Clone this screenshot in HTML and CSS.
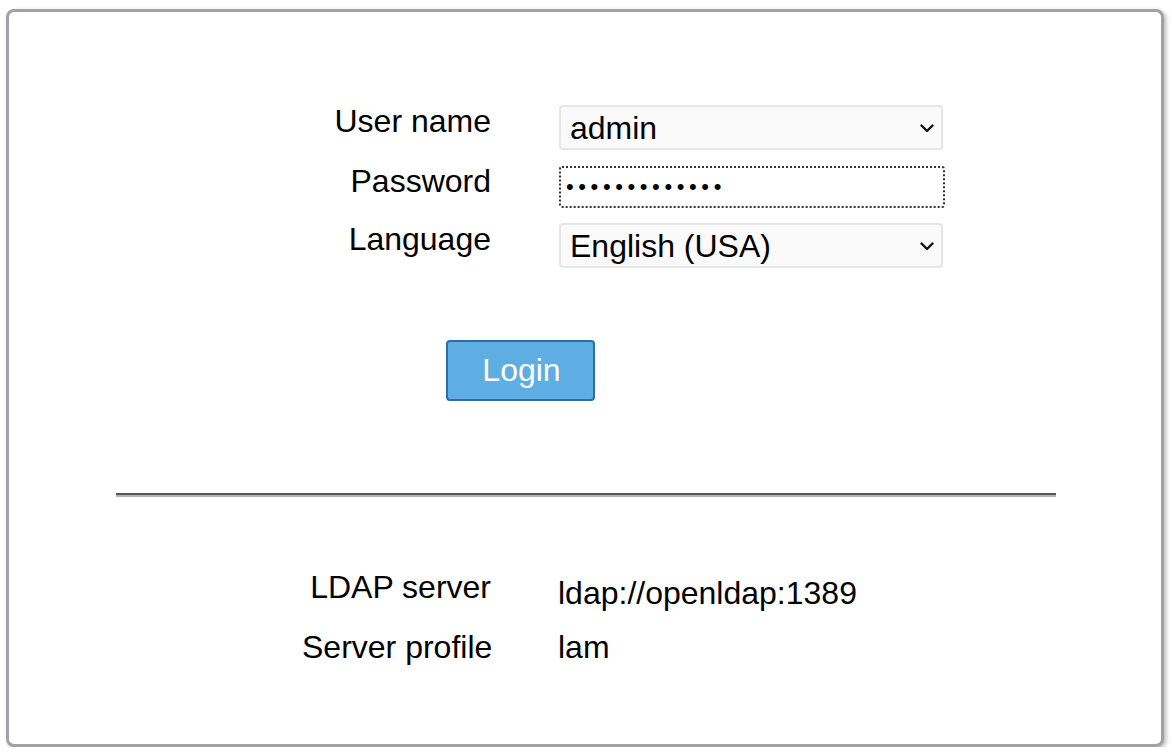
FILE: index.html
```html
<!DOCTYPE html>
<html lang="en">
<head>
<meta charset="utf-8">
<title>LAM Login</title>
<link rel="stylesheet" href="styles.css">
</head>
<body>
<div class="frame">
  <form class="login-grid">
    <label class="lbl" for="user">User name</label>
    <div class="field select-wrap">
      <select id="user" class="select"><option>admin</option></select>
      <svg class="chev" viewBox="0 0 14 9" width="14" height="9"><path d="M1.5 1.5 L7 7 L12.5 1.5" fill="none" stroke="#111" stroke-width="2.4" stroke-linecap="round" stroke-linejoin="round"/></svg>
    </div>
    <label class="lbl" for="pass">Password</label>
    <div class="field pass-cell">
      <input id="pass" class="pass" type="password" value="abcdefghijklm">
    </div>
    <label class="lbl" for="lang">Language</label>
    <div class="field select-wrap">
      <select id="lang" class="select"><option>English (USA)</option></select>
      <svg class="chev" viewBox="0 0 14 9" width="14" height="9"><path d="M1.5 1.5 L7 7 L12.5 1.5" fill="none" stroke="#111" stroke-width="2.4" stroke-linecap="round" stroke-linejoin="round"/></svg>
    </div>
  </form>
  <div class="btn-row"><button class="login-btn" type="button">Login</button></div>
  <hr class="sep">
  <div class="info-grid">
    <div class="lbl">LDAP server</div>
    <div class="val val-first">ldap://openldap:1389</div>
    <div class="lbl">Server profile</div>
    <div class="val">lam</div>
  </div>
</div>
</body>
</html>
```
FILE: styles.css
```css
html, body {
  margin: 0;
  padding: 0;
  background: #ffffff;
}
body {
  font-family: "Liberation Sans", Arial, Helvetica, sans-serif;
  color: #000;
}
.frame {
  box-sizing: border-box;
  width: 1158px;
  height: 738px;
  margin: 9px 0 0 6px;
  border: 3px solid #a2a2a6;
  border-radius: 8px;
  box-shadow: 2px 2px 4px rgba(0, 0, 0, 0.28);
  background: #fff;
  overflow: hidden;
}
.login-grid {
  display: grid;
  grid-template-columns: 189px 386px;
  grid-template-rows: 45px 43px 45px;
  column-gap: 69px;
  row-gap: 15px;
  margin: 93px 0 0 293px;
}
.lbl {
  font-size: 32px;
  line-height: 32px;
  text-align: right;
  align-self: start;
  white-space: nowrap;
}
.field {
  position: relative;
}
.select {
  -webkit-appearance: none;
  appearance: none;
  box-sizing: border-box;
  width: 384px;
  height: 45px;
  margin: 0 0 0 -1px;
  padding: 0 40px 0 9px;
  font-family: "Liberation Sans", Arial, Helvetica, sans-serif;
  font-size: 32px;
  color: #000;
  background: #fafafa;
  border: 2px solid #e6e6e6;
  border-radius: 4px;
  outline: none;
}
.chev {
  position: absolute;
  right: 12px;
  top: 19px;
  pointer-events: none;
}
.pass-cell {
  display: flex;
  align-items: flex-end;
}
.pass {
  box-sizing: border-box;
  width: 386px;
  height: 42px;
  margin: 0 0 0 -1px;
  padding: 0 5px;
  font-family: "Liberation Sans", Arial, Helvetica, sans-serif;
  font-size: 22px;
  letter-spacing: 4.6px;
  color: #000;
  background: #fff;
  border: 2px dotted #333;
  border-radius: 3px;
  outline: none;
}
.btn-row {
  margin: 72px 0 0 437px;
}
.login-btn {
  box-sizing: border-box;
  width: 149px;
  height: 61px;
  margin: 0;
  padding: 0 0 0 2px;
  font-family: "Liberation Sans", Arial, Helvetica, sans-serif;
  font-size: 32px;
  color: #fff;
  background: #5eade3;
  border: 2px solid #2e6ea6;
  border-radius: 4px;
}
.sep {
  width: 940px;
  height: 0;
  margin: 92px 0 0 107px;
  border: 0;
  border-top: 2px solid #555;
  border-bottom: 2px solid #b4b4b4;
}
.info-grid {
  display: grid;
  grid-template-columns: 189px auto;
  grid-template-rows: 32px 32px;
  column-gap: 67px;
  row-gap: 28px;
  margin: 74px 0 0 293px;
}
.val {
  font-size: 32px;
  line-height: 32px;
  white-space: nowrap;
}
.val-first {
  padding-top: 6px;
}
```
